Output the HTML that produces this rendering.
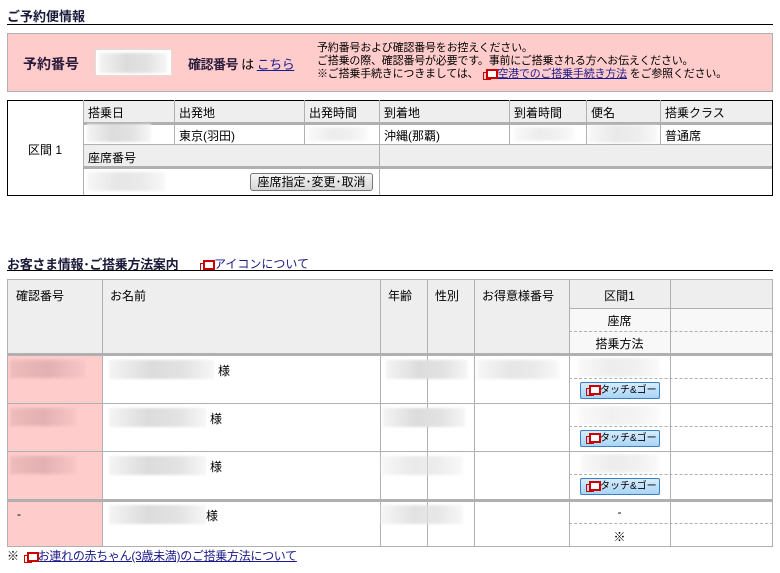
<!DOCTYPE html>
<html><head><meta charset="utf-8"><style>
*{margin:0;padding:0;box-sizing:border-box}
body{width:780px;height:573px;background:#fff;position:relative;overflow:hidden;font-family:"Liberation Sans","Noto Sans CJK JP",sans-serif;font-size:12px;color:#000}
.a{position:absolute;white-space:nowrap}
.h{position:absolute;height:1px;background:#b0b0b0}
.v{position:absolute;width:1px;background:#b0b0b0}
.bl{position:absolute;background:linear-gradient(90deg,#f4f4f4,#dcdcdc 40%,#e2e2e2 70%,#f6f6f6);filter:blur(1px)}
.pb{position:absolute;background:linear-gradient(90deg,#efbcbc,#e2b0b0 50%,#f8c6c6);filter:blur(1.5px)}
.dash{position:absolute;height:0;border-top:1px dashed #b0b0b0}
a{color:#1a1a8a;text-decoration:underline}
.ic{display:inline-block;width:11px;height:9px;position:relative;vertical-align:-1px;margin:0 3px 0 2px}
.ic:before{content:"";position:absolute;left:0;top:3px;width:6px;height:6px;border:1px solid #c00}
.ic:after{content:"";position:absolute;left:3px;top:0;width:8px;height:6px;border:2px solid #c00;background:#fff}
.btn{position:absolute;width:80px;height:17px;border:1px solid #3a7fc4;border-radius:2px;background:linear-gradient(#d6ecfc,#a9d4f5);font-size:10px;color:#000;padding-left:3px;line-height:15px;white-space:nowrap;overflow:hidden}
</style></head><body>
<div class="a" style="left:7px;top:6px;font-size:13px;font-weight:bold;color:#1a1a3a">ご予約便情報</div>
<div class="a" style="left:7px;top:24px;width:766px;height:1px;background:#000"></div>
<div class="a" style="left:7px;top:33px;width:766px;height:59px;background:#ffcccc;border:1px solid #b0b0b0"></div>
<div class="a" style="left:23px;top:54px;font-size:14px;font-weight:bold;color:#2a1a3a">予約番号</div>
<div class="a" style="left:95px;top:49px;width:77px;height:27px;background:#fff;border:1px solid #ddd"></div>
<div class="bl" style="left:99px;top:53px;width:68px;height:20px"></div>
<div class="a" style="left:188px;top:54px;font-size:13px;letter-spacing:-0.5px"><b style="color:#2a1a3a">確認番号</b> は <a href="#">こちら</a></div>
<div class="a" style="left:317px;top:42px;font-size:11px;line-height:13px;letter-spacing:-0.2px">予約番号および確認番号をお控えください。<br>ご搭乗の際、確認番号が必要です。事前にご搭乗される方へお伝えください。<br>※ご搭乗手続きにつきましては、 <span class="ic"></span><a href="#">空港でのご搭乗手続き方法</a> をご参照ください。</div>

<div class="a" style="left:7px;top:100px;width:766px;height:96px;border:1px solid #000"></div>
<div class="a" style="left:83px;top:101px;width:689px;height:21px;background:#eee"></div>
<div class="a" style="left:83px;top:122px;width:689px;height:3px;background:#b0b0b0"></div>
<div class="a" style="left:83px;top:144px;width:689px;height:22px;background:#eee;border-top:1px solid #b0b0b0"></div>
<div class="a" style="left:83px;top:166px;width:689px;height:3px;background:#b0b0b0"></div>
<div class="v" style="left:83px;top:100px;height:95px"></div>
<div class="v" style="left:174px;top:100px;height:44px"></div>
<div class="v" style="left:304px;top:100px;height:44px"></div>
<div class="v" style="left:379px;top:100px;height:95px"></div>
<div class="v" style="left:509px;top:100px;height:44px"></div>
<div class="v" style="left:586px;top:100px;height:44px"></div>
<div class="v" style="left:660px;top:100px;height:44px"></div>
<div class="a" style="left:28px;top:141px">区間 1</div>
<div class="a" style="left:88px;top:104px">搭乗日</div>
<div class="a" style="left:179px;top:104px">出発地</div>
<div class="a" style="left:309px;top:104px">出発時間</div>
<div class="a" style="left:384px;top:104px">到着地</div>
<div class="a" style="left:514px;top:104px">到着時間</div>
<div class="a" style="left:591px;top:104px">便名</div>
<div class="a" style="left:665px;top:104px">搭乗クラス</div>
<div class="bl" style="left:87px;top:124px;width:64px;height:18px"></div>
<div class="a" style="left:179px;top:127px">東京(羽田)</div>
<div class="bl" style="left:308px;top:127px;width:60px;height:14px;opacity:.5"></div>
<div class="a" style="left:384px;top:127px">沖縄(那覇)</div>
<div class="bl" style="left:514px;top:127px;width:60px;height:14px;opacity:.5"></div>
<div class="bl" style="left:588px;top:125px;width:70px;height:18px;opacity:.6"></div>
<div class="a" style="left:665px;top:127px">普通席</div>
<div class="a" style="left:88px;top:149px">座席番号</div>
<div class="bl" style="left:87px;top:172px;width:78px;height:19px;opacity:.7"></div>
<div class="a" style="left:250px;top:173px;width:123px;height:18px;border:1px solid #777;border-radius:3px;background:linear-gradient(#f6f6f6,#d6d6d6);text-align:center;line-height:16px">座席指定･変更･取消</div>

<div class="a" style="left:7px;top:254px;font-size:13px;font-weight:bold;color:#1a1a3a;letter-spacing:-0.3px">お客さま情報･ご搭乗方法案内</div>
<div class="a" style="left:198px;top:255px;font-size:12px"><span class="ic"></span><a href="#" style="text-decoration:none">アイコンについて</a></div>
<div class="a" style="left:7px;top:270px;width:766px;height:1px;background:#000"></div>

<div class="a" style="left:7px;top:279px;width:766px;height:268px;border:1px solid #b0b0b0"></div>
<div class="a" style="left:8px;top:280px;width:764px;height:73px;background:#eee"></div>
<div class="a" style="left:570px;top:308px;width:202px;height:45px;background:#f8f8f8"></div>
<div class="a" style="left:8px;top:355px;width:94px;height:191px;background:#ffcccc"></div>
<div class="a" style="left:7px;top:353px;width:766px;height:3px;background:#b0b0b0"></div>
<div class="a" style="left:7px;top:499px;width:766px;height:3px;background:#b0b0b0"></div>
<div class="h" style="left:7px;top:403px;width:766px"></div>
<div class="h" style="left:7px;top:451px;width:766px"></div>
<div class="h" style="left:569px;top:308px;width:204px"></div>
<div class="dash" style="left:569px;top:331px;width:204px"></div>
<div class="dash" style="left:569px;top:378px;width:204px"></div>
<div class="dash" style="left:569px;top:426px;width:204px"></div>
<div class="dash" style="left:569px;top:474px;width:204px"></div>
<div class="dash" style="left:569px;top:523px;width:204px"></div>
<div class="v" style="left:102px;top:279px;height:268px"></div>
<div class="v" style="left:380px;top:279px;height:268px"></div>
<div class="v" style="left:427px;top:279px;height:268px"></div>
<div class="v" style="left:474px;top:279px;height:268px"></div>
<div class="v" style="left:569px;top:279px;height:268px"></div>
<div class="v" style="left:670px;top:279px;height:268px"></div>
<div class="a" style="left:16px;top:287px">確認番号</div>
<div class="a" style="left:110px;top:287px">お名前</div>
<div class="a" style="left:388px;top:287px">年齢</div>
<div class="a" style="left:435px;top:287px">性別</div>
<div class="a" style="left:482px;top:287px">お得意様番号</div>
<div class="a" style="left:569px;top:287px;width:101px;text-align:center">区間1</div>
<div class="a" style="left:569px;top:312px;width:101px;text-align:center">座席</div>
<div class="a" style="left:569px;top:335px;width:101px;text-align:center">搭乗方法</div>

<div class="pb" style="left:10px;top:360px;width:75px;height:18px"></div>
<div class="bl" style="left:109px;top:360px;width:105px;height:19px"></div>
<div class="a" style="left:218px;top:362px">様</div>
<div class="bl" style="left:386px;top:360px;width:82px;height:19px"></div>
<div class="bl" style="left:477px;top:360px;width:82px;height:19px;opacity:.7"></div>
<div class="bl" style="left:578px;top:358px;width:82px;height:19px;opacity:.5"></div>
<div class="btn" style="left:580px;top:382px"><span class="ic"></span>タッチ&amp;ゴー</div>

<div class="pb" style="left:10px;top:408px;width:66px;height:18px"></div>
<div class="bl" style="left:109px;top:408px;width:97px;height:19px"></div>
<div class="a" style="left:210px;top:410px">様</div>
<div class="bl" style="left:383px;top:408px;width:82px;height:19px"></div>
<div class="bl" style="left:578px;top:406px;width:82px;height:19px;opacity:.4"></div>
<div class="btn" style="left:580px;top:430px"><span class="ic"></span>タッチ&amp;ゴー</div>

<div class="pb" style="left:10px;top:456px;width:66px;height:18px"></div>
<div class="bl" style="left:109px;top:456px;width:97px;height:19px"></div>
<div class="a" style="left:210px;top:458px">様</div>
<div class="bl" style="left:381px;top:456px;width:82px;height:19px;opacity:.6"></div>
<div class="bl" style="left:581px;top:454px;width:78px;height:19px;opacity:.5"></div>
<div class="btn" style="left:580px;top:478px"><span class="ic"></span>タッチ&amp;ゴー</div>

<div class="a" style="left:17px;top:507px">-</div>
<div class="bl" style="left:109px;top:505px;width:97px;height:19px"></div>
<div class="a" style="left:206px;top:507px">様</div>
<div class="bl" style="left:381px;top:505px;width:82px;height:19px;opacity:.8"></div>
<div class="a" style="left:569px;top:505px;width:101px;text-align:center">-</div>
<div class="a" style="left:569px;top:528px;width:101px;text-align:center">※</div>

<div class="a" style="left:7px;top:547px;letter-spacing:-0.3px">※ <span class="ic"></span><a href="#">お連れの赤ちゃん(3歳未満)のご搭乗方法について</a></div>
</body></html>
